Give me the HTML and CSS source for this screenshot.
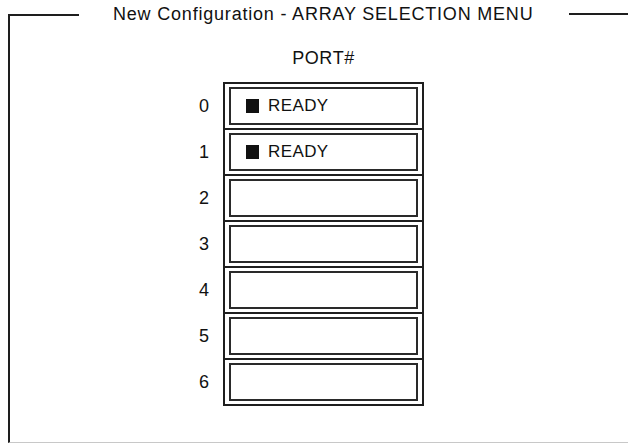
FILE: index.html
```html
<!DOCTYPE html>
<html lang="en">
<head>
  <meta charset="UTF-8">
  <meta name="viewport" content="width=device-width, initial-scale=1.0">
  <title>New Configuration - ARRAY SELECTION MENU</title>
  <link rel="stylesheet" href="styles.css">
</head>
<body>

  <div class="screen">
    <div class="frame-head">
      <span class="rule rule-left"></span>
      <h1 class="title">New Configuration - ARRAY SELECTION MENU</h1>
      <span class="rule rule-right"></span>
    </div>

    <div class="frame-body">
      <div class="port-label">PORT#</div>

      <div class="ports">
        <div class="port-nums">
          <div class="num">0</div>
          <div class="num">1</div>
          <div class="num">2</div>
          <div class="num">3</div>
          <div class="num">4</div>
          <div class="num">5</div>
          <div class="num">6</div>
        </div>

        <div class="port-table">
          <div class="port-row"><div class="cell"><span class="mark"></span>READY</div></div>
          <div class="port-row"><div class="cell"><span class="mark"></span>READY</div></div>
          <div class="port-row"><div class="cell"></div></div>
          <div class="port-row"><div class="cell"></div></div>
          <div class="port-row"><div class="cell"></div></div>
          <div class="port-row"><div class="cell"></div></div>
          <div class="port-row"><div class="cell"></div></div>
        </div>
      </div>
    </div>
  </div>

</body>
</html>
```

FILE: styles.css
```css
* { box-sizing: border-box; }
body { margin: 0; background: #fff; color: #111; font-family: "Liberation Sans", Arial, sans-serif; }

.screen { margin-left: 8px; width: 620px; }

/* top edge of the frame, broken by the title */
.frame-head { display: flex; align-items: center; height: 28px; }
.rule { display: block; border-top: 2px solid #1e1e1e; }
.rule-left { align-self: flex-end; width: 71px; height: 14px; border-left: 2px solid #1e1e1e; }
.rule-right { margin-left: auto; width: 59px; height: 0; }
.title { margin: 0 0 0 34px; font-size: 18px; font-weight: normal; letter-spacing: 0.8px; white-space: nowrap; }

.frame-body { height: 415px; padding-top: 20px; border-left: 2px solid #1e1e1e; border-bottom: 1px solid #c8c8c8; }

.port-label { margin-left: 213px; width: 201px; text-align: center; font-size: 18px; line-height: 21px; letter-spacing: 0.6px; }

.ports { display: flex; gap: 11px; margin: 13px 0 0 186px; }

.port-nums { display: flex; flex-direction: column; gap: 2px; width: 16px; padding-top: 2px; }
.num { height: 44px; display: flex; align-items: center; justify-content: center; font-size: 18px; }

.port-table { width: 201px; border: 2px solid #1e1e1e; }
.port-row { padding: 3px 4px; }
.port-row + .port-row { border-top: 2px solid #1e1e1e; }
.cell { height: 38px; border: 2px solid #2a2a2a; display: flex; align-items: center; gap: 9px; padding-left: 15px; font-size: 17px; letter-spacing: 0.4px; }
.mark { width: 13px; height: 14px; background: #111; }
```
